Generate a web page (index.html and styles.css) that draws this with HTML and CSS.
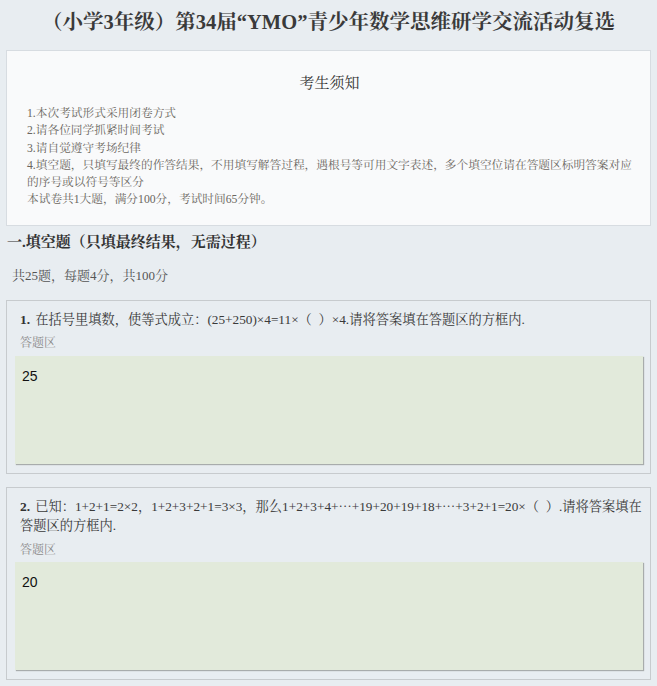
FILE: index.html
```html
<!DOCTYPE html>
<html lang="zh-CN">
<head>
<meta charset="utf-8">
<title>YMO 复选</title>
<link rel="stylesheet" href="styles.css">
</head>
<body>
<h1 class="page-title">（小学3年级）第34届“YMO”青少年数学思维研学交流活动复选</h1>

<div class="notice">
  <h2 class="notice-title">考生须知</h2>
  <div class="notice-list">
    <div>1.本次考试形式采用闭卷方式</div>
    <div>2.请各位同学抓紧时间考试</div>
    <div>3.请自觉遵守考场纪律</div>
    <div>4.填空题，只填写最终的作答结果，不用填写解答过程，遇根号等可用文字表述，多个填空位请在答题区标明答案对应的序号或以符号等区分</div>
    <div>本试卷共1大题，满分100分，考试时间65分钟。</div>
  </div>
</div>

<h3 class="section-title">一.填空题（只填最终结果，无需过程）</h3>
<div class="section-sub">共25题，每题4分，共100分</div>

<div class="question">
  <div class="q-text"><b class="q-num">1.</b>在括号里填数，使等式成立：(25+250)×4=11×（&nbsp;&nbsp;）×4.请将答案填在答题区的方框内.</div>
  <div class="q-label">答题区</div>
  <div class="answer">25</div>
</div>

<div class="question">
  <div class="q-text"><b class="q-num">2.</b>已知：1+2+1=2×2，1+2+3+2+1=3×3，那么1+2+3+4+⋯+19+20+19+18+⋯+3+2+1=20×（&nbsp;&nbsp;）.请将答案填在答题区的方框内.</div>
  <div class="q-label">答题区</div>
  <div class="answer">20</div>
</div>
</body>
</html>
```

FILE: styles.css
```css
html, body {
  margin: 0;
  padding: 0;
}
body {
  background: #e8edf1;
  padding: 0 6px 20px;
  font-family: "Liberation Serif", "Noto Serif CJK SC", "Noto Sans CJK SC", serif;
  color: #333;
}
.page-title {
  margin: 0;
  padding: 10px 0 16px;
  line-height: 24px;
  font-size: 20.5px;
  font-weight: bold;
  text-align: center;
  color: #3a3a3a;
}
.notice {
  background: #f9fafb;
  border: 1px solid #d7dce1;
  padding: 22px 18px 16px 20px;
}
.notice-title {
  margin: 0 0 12px;
  font-size: 15px;
  line-height: 20px;
  font-weight: normal;
  text-align: center;
  color: #333;
}
.notice-list {
  font-size: 11.7px;
  line-height: 17.3px;
  color: #6a6660;
}
.section-title {
  margin: 6px 0 0;
  padding-left: 1px;
  font-size: 15px;
  line-height: 20px;
  font-weight: bold;
  color: #333;
}
.section-sub {
  margin-top: 15px;
  padding-left: 6px;
  font-size: 13px;
  line-height: 18px;
  color: #555;
}
.question {
  margin-top: 15px;
  border: 1px solid #c7cbce;
  padding: 9px 7px 9px 8px;
}
.question + .question {
  margin-top: 13px;
}
.q-text {
  padding: 0 0 0 5px;
  font-size: 13.25px;
  line-height: 19.5px;
  color: #3a3a3a;
}
.q-num {
  display: inline-block;
  margin-right: 5px;
  color: #333;
  font-size: 13.5px;
}
.q-label {
  margin-top: 6px;
  padding-left: 5px;
  font-size: 12px;
  line-height: 17px;
  color: #8c8c8c;
}
.answer {
  margin-top: 3.5px;
  height: 108px;
  box-sizing: border-box;
  background: #e2eadb;
  box-shadow: 1px 1px 1px #a8acac;
  padding: 10px 7px;
  font-family: "Liberation Sans", Arial, sans-serif;
  font-size: 14px;
  line-height: 20px;
  color: #111;
}
```
